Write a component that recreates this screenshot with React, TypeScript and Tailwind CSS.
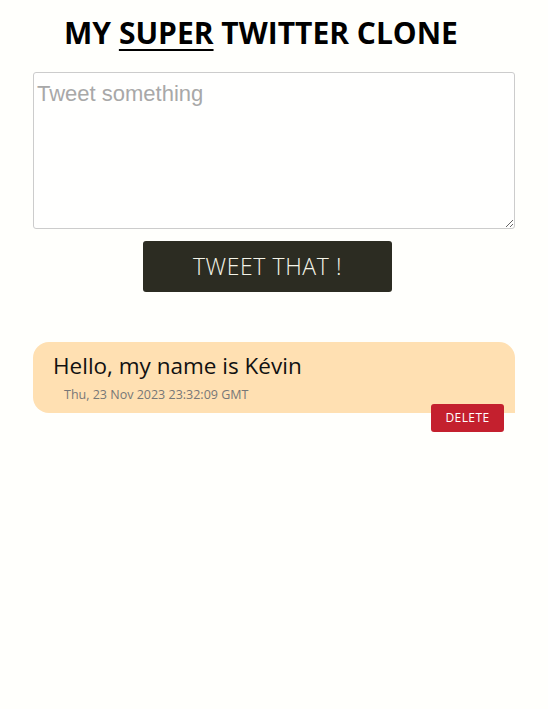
export default function App() {
  return (
    <div className="min-h-[709px] bg-[#fffffc] flex flex-col items-center" style={{ fontFamily: '"Open Sans", "Noto Sans", sans-serif' }}>
      <h1 className="mt-[14px] mr-[26px] text-[30px] leading-[38px] font-bold text-black">
        MY <span className="underline underline-offset-[5px] decoration-2">SUPER</span> TWITTER CLONE
      </h1>
      <textarea
        placeholder="Tweet something"
        className="mt-[20px] w-[482px] h-[157px] border border-[#cccccc] rounded-[3px] bg-[#fffffe] px-[3px] py-[8px] text-[22px] leading-[26px] placeholder:text-[#a8a8a8] outline-none"
        style={{ fontFamily: '"Liberation Sans", Arial, sans-serif' }}
      />
      <button className="mt-[12px] mr-[13px] w-[249px] h-[51px] bg-[#2c2c22] rounded-[3px] text-[#f4f4e8] text-[23px] font-light tracking-[0.6px]">
        TWEET THAT !
      </button>
      <div className="mt-[50px] w-[482px] flex flex-col items-end">
        <div className="w-full h-[71px] bg-[#ffe0b2] rounded-tl-[16px] rounded-tr-[16px] rounded-bl-[16px] pl-[20px] pt-[9px]">
          <div className="text-[22.5px] leading-[30px] text-[#111]">Hello, my name is Kévin</div>
          <div className="ml-[11px] mt-[6px] text-[12.5px] leading-[16px] text-[#777]">Thu, 23 Nov 2023 23:32:09 GMT</div>
        </div>
        <button className="-mt-[9px] mr-[11px] w-[73px] h-[28px] bg-[#c4202e] rounded-[3px] text-white text-[12px] tracking-[0.4px]">
          DELETE
        </button>
      </div>
    </div>
  );
}
